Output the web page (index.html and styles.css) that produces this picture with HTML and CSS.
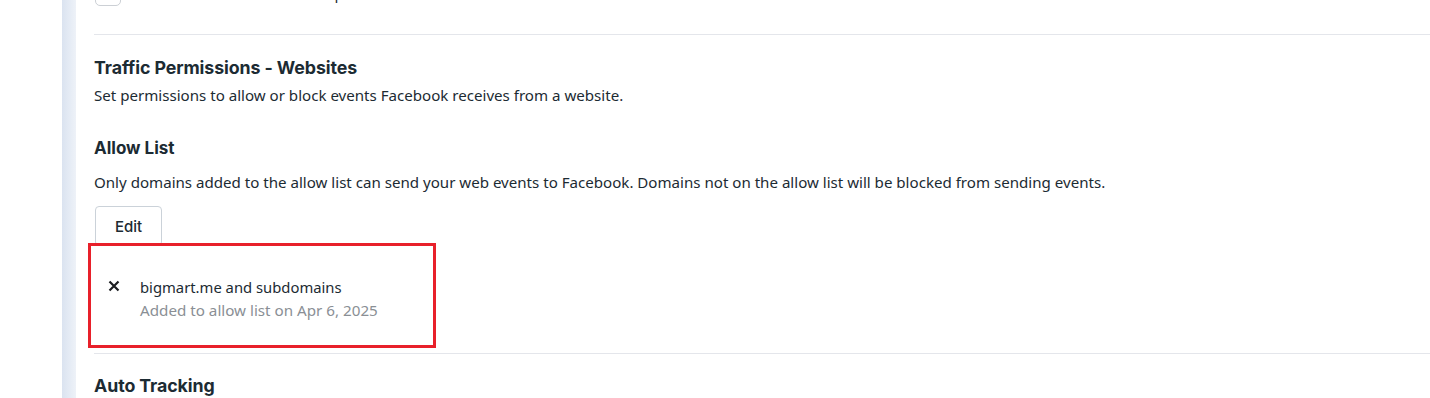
FILE: index.html
```html
<!DOCTYPE html>
<html>
<head>
<meta charset="utf-8">
<link rel="stylesheet" href="styles.css">
</head>
<body>
<div class="page">
  <div class="rail"></div>
  <main class="content">
    <div class="top-row">
      <span class="checkbox"></span>
      <span class="top-text">Block traffic from unknown pixel sources</span>
    </div>
    <hr class="divider first">
    <section class="section">
      <h2 class="title">Traffic Permissions - Websites</h2>
      <p class="text">Set permissions to allow or block events Facebook receives from a website.</p>
      <h3 class="subtitle">Allow List</h3>
      <p class="text desc">Only domains added to the allow list can send your web events to Facebook. Domains not on the allow list will be blocked from sending events.</p>
      <button class="btn">Edit</button>
      <div class="item">
        <span class="remove">
          <svg width="12" height="12" viewBox="0 0 12 12"><path d="M1.5 1.5 L10.5 10.5 M10.5 1.5 L1.5 10.5" stroke="#1c1e21" stroke-width="2.2" stroke-linecap="butt"/></svg>
        </span>
        <div class="item-body">
          <div class="item-name">bigmart.me and subdomains</div>
          <div class="item-meta">Added to allow list on Apr 6, 2025</div>
        </div>
        <div class="highlight"></div>
      </div>
    </section>
    <hr class="divider">
    <h2 class="title auto">Auto Tracking</h2>
  </main>
</div>
</body>
</html>
```

FILE: styles.css
```css
html, body {
  margin: 0;
  padding: 0;
  background: #ffffff;
  overflow: hidden;
}
body {
  font-family: "Noto Sans", "Open Sans", sans-serif;
  color: #1c2b33;
}
.page {
  display: flex;
  height: 398px;
  padding-left: 62px;
}
.rail {
  width: 14px;
  flex: none;
  background: linear-gradient(to right, #dbe3f0 0, #e6ecf5 60%, #eef2f8 100%);
}
.content {
  flex: 1;
  padding-left: 18px;
  min-width: 0;
}
.top-row {
  display: flex;
  align-items: flex-start;
  gap: 19px;
  margin-top: -18px;
  height: 24px;
}
.checkbox {
  width: 26px;
  height: 24px;
  border: 1px solid #ccd0d5;
  border-radius: 5px;
  box-sizing: border-box;
  flex: none;
  margin-left: 1px;
}
.top-text {
  font-size: 15px;
  line-height: 20px;
  margin-top: 1px;
  color: #1c2b33;
  white-space: nowrap;
}
.divider {
  border: 0;
  border-top: 1px solid #e4e6eb;
  margin: 0;
}
.divider.first {
  margin-top: 28px;
}
.section {
  padding-top: 22px;
  padding-bottom: 4px;
}
.title {
  font-family: Inter, "Noto Sans", sans-serif;
  font-weight: 700;
  font-size: 17.8px;
  line-height: 22px;
  margin: 0;
  color: #1c2b33;
  letter-spacing: -0.1px;
}
.subtitle {
  font-family: Inter, "Noto Sans", sans-serif;
  font-weight: 700;
  font-size: 17px;
  line-height: 20px;
  margin: 33px 0 0 0;
  color: #1c2b33;
}
.text {
  font-size: 15.1px;
  line-height: 20px;
  margin: 6px 0 0 0;
  color: #1c2b33;
}
.text.desc {
  margin-top: 14px;
}
.btn {
  display: block;
  margin-top: 14px;
  margin-left: 1px;
  width: 67px;
  height: 40px;
  background: #ffffff;
  border: 1px solid #cbd2d9;
  border-radius: 4px;
  font-family: Inter, "Noto Sans", sans-serif;
  font-size: 15px;
  font-weight: 500;
  color: #1c2b33;
  padding: 0;
}
.item {
  position: relative;
  display: flex;
  align-items: flex-start;
  gap: 20px;
  padding: 31px 0 28px 14px;
}
.remove {
  display: flex;
  width: 12px;
  height: 12px;
  margin-top: 3px;
}
.item-name {
  font-size: 14.8px;
  line-height: 21px;
  color: #1c2b33;
}
.item-meta {
  font-size: 15.2px;
  line-height: 21px;
  color: #8a8f95;
  margin-top: 2px;
}
.highlight {
  position: absolute;
  left: -6px;
  top: -3px;
  width: 348px;
  height: 105px;
  border: 3px solid #e8202a;
  box-sizing: border-box;
  pointer-events: none;
}
.title.auto {
  margin-top: 21px;
}
```
